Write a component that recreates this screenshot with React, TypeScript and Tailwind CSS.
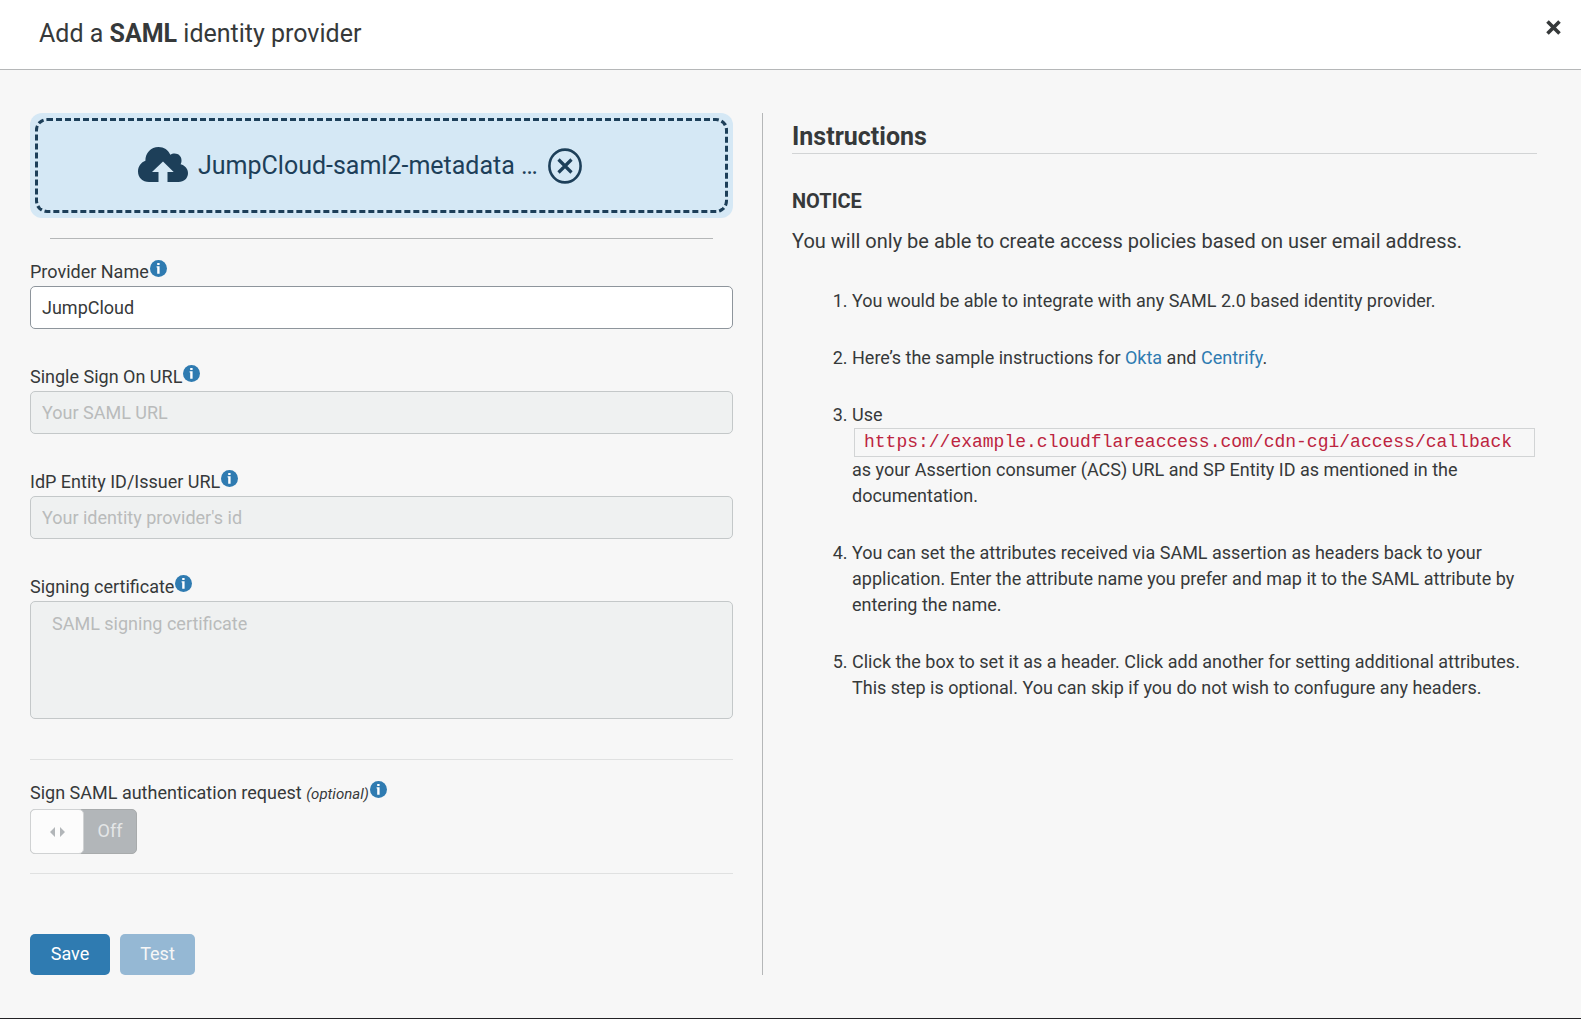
import { useState } from "react";
import type { ReactNode } from "react";

function InfoIcon() {
  return (
    <svg viewBox="0 0 17 17" className="ml-px mt-0.5 size-[17px] shrink-0" aria-hidden="true">
      <circle cx="8.5" cy="8.5" r="8.5" fill="#2f7bb1" />
      <path d="M7.2 3.1h2.4v2H7.2zM6.6 6.2h3v7.6H7.2V7.4h-.6z" fill="#fff" />
    </svg>
  );
}

function Label({ htmlFor, children }: { htmlFor: string; children: ReactNode }) {
  return (
    <div className="flex items-start pb-px leading-[27px]">
      <label htmlFor={htmlFor}>{children}</label>
      <InfoIcon />
    </div>
  );
}

function CloudUploadIcon() {
  return (
    <svg viewBox="0 0 50 35" className="mb-0.5 h-[35px] w-[50px] shrink-0" aria-hidden="true">
      <path
        fill="#1d3f59"
        fillRule="evenodd"
        d="M11 35C4.5 35 0 30.4 0 24.5 0 19.2 3.2 15.3 7.4 13.8 7.3 5.8 13 0 20.5 0 26 0 30.3 3 32.2 7.8 33.6 6.8 35 6.5 36.6 6.5 40.6 6.5 43.5 9.4 43.5 13.2 43.5 14.8 43.3 16 42.6 17.2 47 18.4 50 21.8 50 26 50 31.2 46 35 40.5 35H29.5V25H35.7L25 14.5 14 25H20.5V35Z"
      />
    </svg>
  );
}

function CircleCloseIcon() {
  return (
    <svg viewBox="0 0 34 36" className="h-9 w-[34px]" fill="none" stroke="#1d3f59" aria-hidden="true">
      <ellipse cx="17" cy="18" rx="15.6" ry="16.4" strokeWidth="2.6" />
      <path d="M10.5 11.5l13 13M23.5 11.5l-13 13" strokeWidth="3.2" />
    </svg>
  );
}

const inputClass =
  "block h-[43px] w-full rounded-[5px] border border-[#8e959c] bg-white px-[11px] text-lg outline-none disabled:border-[#c4c8c9] disabled:bg-[#eff1f1] disabled:placeholder:text-[#b9bbbb]";

export default function App() {
  const [name, setName] = useState("JumpCloud");

  return (
    <div className="flex min-h-screen flex-col border-b border-[#232225] bg-[#f7f7f7] font-['Roboto',sans-serif] text-lg text-[#36393a]">
      <header className="flex h-[70px] items-start justify-between border-b border-[#b5b7b8] bg-white pl-[39px] pr-5 pt-4">
        <h1 className="text-[25px] leading-9">
          Add a <strong className="font-bold">SAML</strong> identity provider
        </h1>
        <button type="button" aria-label="Close" className="mt-1 flex size-[15px] items-center justify-center">
          <svg viewBox="0 0 15 15" className="size-[15px]" stroke="#36393a" strokeWidth="3.6" aria-hidden="true">
            <path d="M1.5 1.5l12 12M13.5 1.5l-12 12" />
          </svg>
        </button>
      </header>

      <main className="grid grid-cols-[733fr_774fr] pb-[43px] pl-[30px] pr-11 pt-[43px]">
        <form className="border-r border-[#b5b7b8] pr-[29px]" onSubmit={(e) => e.preventDefault()}>
          <div className="rounded-xl bg-[#d5e8f5] p-[5px]">
            <div className="flex h-[95px] items-center rounded-xl border-[3px] border-dashed border-[#1d3f59] pl-[100px] text-[#1d3f59]">
              <CloudUploadIcon />
              <span className="ml-[10px] text-[25px] leading-9">JumpCloud-saml2-metadata …</span>
              <button type="button" aria-label="Remove file" className="ml-[10px]">
                <CircleCloseIcon />
              </button>
            </div>
          </div>

          <hr className="mx-5 mt-5 border-[#b5b7b8]" />

          <div className="mt-[19px]">
            <Label htmlFor="name">Provider Name</Label>
            <input id="name" type="text" className={inputClass} value={name} onChange={(e) => setName(e.target.value)} />
          </div>
          <div className="mt-[34px]">
            <Label htmlFor="sso">Single Sign On URL</Label>
            <input id="sso" type="text" className={inputClass} placeholder="Your SAML URL" disabled />
          </div>
          <div className="mt-[34px]">
            <Label htmlFor="entity">IdP Entity ID/Issuer URL</Label>
            <input id="entity" type="text" className={inputClass} placeholder="Your identity provider's id" disabled />
          </div>
          <div className="mt-[34px]">
            <Label htmlFor="cert">Signing certificate</Label>
            <textarea
              id="cert"
              className="block h-[118px] w-full resize-none rounded-[5px] border border-[#c4c8c9] bg-[#eff1f1] px-[21px] py-2 text-lg placeholder:text-[#b9bbbb]"
              placeholder="SAML signing certificate"
              disabled
            />
          </div>

          <hr className="mt-10 border-[#e0e1e1]" />

          <div className="mt-[19px]">
            <Label htmlFor="sign">
              Sign SAML authentication request <em className="text-[15px]">(optional)</em>
            </Label>
            <button
              id="sign"
              type="button"
              role="switch"
              aria-checked="false"
              disabled
              className="flex h-[45px] w-[107px] rounded-[5px] border border-[#a8abac] bg-[#b2b6b9] text-[#e4e6e7]"
            >
              <span className="-my-px -ml-px flex h-[45px] w-[54px] items-center justify-center rounded-[5px] border border-[#d0d2d3] bg-[#fcfcfc]">
                <svg viewBox="0 0 15 10" className="h-[10px] w-[15px]" fill="#b2b6b9" aria-hidden="true">
                  <path d="M5 0v10L0 5zM10 0v10l5-5z" />
                </svg>
              </span>
              <span className="flex h-full flex-1 items-center justify-center pb-0.5">Off</span>
            </button>
          </div>

          <hr className="mt-[19px] border-[#e0e1e1]" />

          <div className="mt-[60px] flex gap-[10px]">
            <button type="submit" className="h-[41px] min-w-20 rounded-[5px] bg-[#2f7bb1] pb-0.5 text-white">
              Save
            </button>
            <button type="button" disabled className="h-[41px] min-w-[75px] rounded-[5px] bg-[#95b8d4] pb-0.5 text-[#f7f7f7]">
              Test
            </button>
          </div>
        </form>

        <section className="pl-[29px]">
          <h2 className="mt-2 border-b border-[#d2d4d5] text-[25px] font-bold leading-8">Instructions</h2>
          <h3 className="mt-8 text-xl font-bold leading-[30px]">NOTICE</h3>
          <p className="mt-[10px] text-xl leading-[30px]">
            You will only be able to create access policies based on user email address.
          </p>
          <ol className="mt-8 list-decimal space-y-[31px] pl-[60px] leading-[26px]">
            <li>You would be able to integrate with any SAML 2.0 based identity provider.</li>
            <li>
              Here’s the sample instructions for{" "}
              <a href="#okta" className="text-[#2f7bb1]">Okta</a> and{" "}
              <a href="#centrify" className="text-[#2f7bb1]">Centrify</a>.
            </li>
            <li>
              Use{" "}
              <code className="mx-0.5 block border border-[#d2d4d5] px-[9px] font-['Liberation_Mono',monospace] text-lg leading-[27px] text-[#bd2440]">
                https://example.cloudflareaccess.com/cdn-cgi/access/callback
              </code>
              as your Assertion consumer (ACS) URL and SP Entity ID as mentioned in the documentation.
            </li>
            <li>
              You can set the attributes received via SAML assertion as headers back to your application. Enter the
              attribute name you prefer and map it to the SAML attribute by entering the name.
            </li>
            <li>
              Click the box to set it as a header. Click add another for setting additional attributes. This step is
              optional. You can skip if you do not wish to confugure any headers.
            </li>
          </ol>
        </section>
      </main>
    </div>
  );
}
